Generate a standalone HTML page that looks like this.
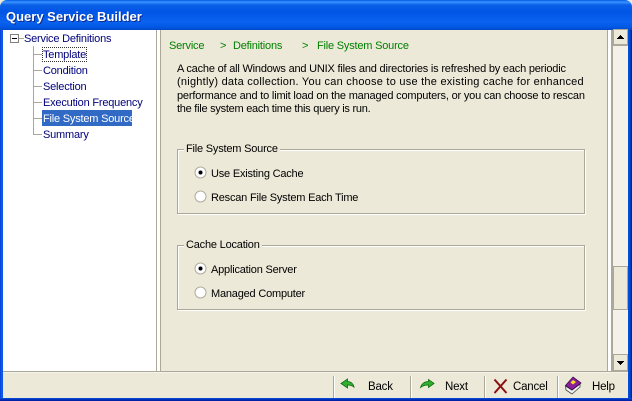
<!DOCTYPE html>
<html><head><meta charset="utf-8"><style>
html,body{margin:0;padding:0;background:#0a3ad0}
#w{position:relative;width:632px;height:401px;overflow:hidden;font:11px "Liberation Sans",sans-serif;color:#000;background:#ece9d8}
#w div{position:absolute;white-space:nowrap}
.t{height:14px;line-height:14px}
.r{letter-spacing:-.2px}
.tree{color:#00007c;height:16px;line-height:14px;letter-spacing:-.2px}
.g{color:#008000;font-size:11px;line-height:14px;letter-spacing:-.2px}
.l{background:#aca899}
.s{background:#aca899;box-shadow:1px 0 0 #fff}
.b{font-size:11.5px;letter-spacing:-.2px}
</style></head><body><div id="w">
<div style="left:0;top:0;width:632px;height:30px;border-radius:7px 7px 0 0;background:linear-gradient(180deg,#0058e6 0,#3a93ff 2px,#0a5fe8 5px,#0055e5 12px,#0a62f0 22px,#0258e4 27px,#0048c8 30px)"></div>
<div style="left:6px;top:8px;color:#fff;font:bold 13px/18px 'Liberation Sans',sans-serif;text-shadow:1px 1px 0 #0a2a90">Query Service Builder</div>
<div style="left:0;top:30px;width:3px;height:368px;background:linear-gradient(90deg,#0a3ad0,#0a5ef0 50%,#0855e5)"></div>
<div style="left:628px;top:30px;width:4px;height:368px;background:linear-gradient(90deg,#0055e5,#0040c8,#001ea0)"></div>
<div style="left:0;top:398px;width:632px;height:3px;background:linear-gradient(180deg,#0a50e0,#0030b8,#001ea0)"></div>

<!-- tree -->
<div style="left:3px;top:30px;width:153px;height:341px;background:#fff"></div>
<div class="l" style="left:156px;top:30px;width:1px;height:341px"></div>
<div style="left:157px;top:30px;width:3px;height:341px;background:#fff"></div>
<div class="l" style="left:160px;top:30px;width:1px;height:341px"></div>
<div style="left:10px;top:34px;width:7px;height:7px;border:1px solid #808080;background:#fff"></div>
<div style="left:12px;top:38px;width:5px;height:1px;background:#000"></div>
<div class="l" style="left:19px;top:38px;width:5px;height:1px"></div>
<div class="l" style="left:33px;top:46px;width:1px;height:88px"></div>
<div class="l" style="left:33px;top:54px;width:9px;height:1px"></div>
<div class="l" style="left:33px;top:70px;width:9px;height:1px"></div>
<div class="l" style="left:33px;top:86px;width:9px;height:1px"></div>
<div class="l" style="left:33px;top:102px;width:9px;height:1px"></div>
<div class="l" style="left:33px;top:118px;width:9px;height:1px"></div>
<div class="l" style="left:33px;top:134px;width:9px;height:1px"></div>
<div class="tree" style="left:24px;top:32px">Service Definitions</div>
<div style="left:42px;top:47px;width:45px;height:15px;border:1px dotted #333;box-sizing:border-box"></div>
<div class="tree" style="left:43px;top:48px">Template</div>
<div class="tree" style="left:43px;top:64px">Condition</div>
<div class="tree" style="left:43px;top:80px">Selection</div>
<div class="tree" style="left:43px;top:96px">Execution Frequency</div>
<div style="left:42px;top:110px;width:90px;height:16px;background:#316ac5"></div>
<div class="tree" style="left:43px;top:112px;color:#fff">File System Source</div>
<div class="tree" style="left:43px;top:128px">Summary</div>

<!-- breadcrumb -->
<div class="g" style="left:169px;top:39px">Service</div>
<div class="g" style="left:220px;top:39px">&gt;</div>
<div class="g" style="left:233px;top:39px">Definitions</div>
<div class="g" style="left:302px;top:39px">&gt;</div>
<div class="g" style="left:317px;top:39px">File System Source</div>

<div class="t" style="left:177px;top:62px;letter-spacing:-.2px">A cache of all Windows and UNIX files and directories is refreshed by each periodic</div>
<div class="t" style="left:177px;top:75px;letter-spacing:.24px">(nightly) data collection. You can choose to use the existing cache for enhanced</div>
<div class="t" style="left:177px;top:89px;letter-spacing:-.185px">performance and to limit load on the managed computers, or you can choose to rescan</div>
<div class="t" style="left:177px;top:102px;letter-spacing:-.26px">the file system each time this query is run.</div>

<!-- group 1 -->
<div style="left:177px;top:149px;width:406px;height:63px;border:1px solid #aca899;box-shadow:inset 1px 1px 0 #fff,1px 1px 0 #fff"></div>
<div class="t r" style="left:184px;top:142px;background:#ece9d8;padding:0 2px">File System Source</div>
<svg style="position:absolute;left:194px;top:166px" width="13" height="13"><circle cx="6.5" cy="6.5" r="5.5" fill="#fff" stroke="#b0ad9e"/><circle cx="6.5" cy="6.5" r="2" fill="#000"/></svg>
<div class="t r" style="left:211px;top:167px">Use Existing Cache</div>
<svg style="position:absolute;left:194px;top:190px" width="13" height="13"><circle cx="6.5" cy="6.5" r="5.5" fill="#fff" stroke="#b0ad9e"/></svg>
<div class="t r" style="left:211px;top:191px">Rescan File System Each Time</div>

<!-- group 2 -->
<div style="left:177px;top:245px;width:406px;height:63px;border:1px solid #aca899;box-shadow:inset 1px 1px 0 #fff,1px 1px 0 #fff"></div>
<div class="t r" style="left:184px;top:238px;background:#ece9d8;padding:0 2px">Cache Location</div>
<svg style="position:absolute;left:194px;top:262px" width="13" height="13"><circle cx="6.5" cy="6.5" r="5.5" fill="#fff" stroke="#b0ad9e"/><circle cx="6.5" cy="6.5" r="2" fill="#000"/></svg>
<div class="t r" style="left:211px;top:263px">Application Server</div>
<svg style="position:absolute;left:194px;top:286px" width="13" height="13"><circle cx="6.5" cy="6.5" r="5.5" fill="#fff" stroke="#b0ad9e"/></svg>
<div class="t r" style="left:211px;top:287px">Managed Computer</div>

<!-- scrollbar -->
<div class="l" style="left:607px;top:30px;width:1px;height:341px"></div>
<div style="left:608px;top:30px;width:3px;height:341px;background:#fff"></div>
<div class="l" style="left:611px;top:30px;width:2px;height:341px"></div>
<div style="left:613px;top:30px;width:15px;height:341px;background:#f3f1e8"></div>
<div style="left:613px;top:29px;width:15px;height:17px;box-sizing:border-box;border:1px solid #aca899;border-width:1px 1px 2px 1px;background:#ece9d8"></div>
<svg style="position:absolute;left:617px;top:35px" width="8" height="5"><path d="M3 0h1v1h1v1h1v1h1v1H0V3h1V2h1V1h1z" fill="#000"/></svg>
<div style="left:613px;top:266px;width:15px;height:44px;box-sizing:border-box;border:1px solid #aca899;background:#ece9d8"></div>
<div style="left:613px;top:354px;width:15px;height:17px;box-sizing:border-box;border:1px solid #aca899;background:#ece9d8"></div>
<svg style="position:absolute;left:617px;top:361px" width="8" height="5"><path d="M0 0h7v1H6v1H5v1H4v1H3V3H2V2H1V1H0z" fill="#000"/></svg>

<!-- toolbar -->
<div class="l" style="left:3px;top:371px;width:625px;height:1px"></div>
<div style="left:3px;top:372px;width:625px;height:26px;background:#ece9d8;box-shadow:inset 0 1px 0 #f5f3ea"></div>
<div class="s" style="left:333px;top:376px;width:1px;height:22px"></div>
<div class="s" style="left:410px;top:376px;width:1px;height:22px"></div>
<div class="s" style="left:484px;top:376px;width:1px;height:22px"></div>
<div class="s" style="left:557px;top:376px;width:1px;height:22px"></div>
<svg style="position:absolute;left:340px;top:378px" width="16" height="12"><path d="M1 5.5L7.5 1V3.5C10.5 3.5 13 5 14 9C12 7.5 10 7 7.5 7V10Z" fill="#30b030" stroke="#0b6b0b" stroke-width=".8"/></svg>
<svg style="position:absolute;left:419px;top:378px" width="16" height="12"><path d="M15 5.5L9.5 1.5V3.5C6 3.5 3 5 1.5 9.5C4 7.5 6.5 7 9.5 7V9.5Z" fill="#30b030" stroke="#0b6b0b" stroke-width=".8"/></svg>
<svg style="position:absolute;left:493px;top:378px" width="16" height="16"><path d="M1.5 1.5L13.5 15M13.5 1.5L1.5 15" stroke="#8c1010" stroke-width="2" fill="none"/></svg>
<svg style="position:absolute;left:564px;top:376px" width="18" height="19"><path d="M1.5 10L2 14L8 18L16 11V8L8 14Z" fill="#f0f0f0" stroke="#444" stroke-width=".8"/><path d="M1.5 9.5L9 1L17 7L8 14Z" fill="#8a1f9a" stroke="#3a0a4a" stroke-width=".8"/><path d="M6.5 6.5L9 4L12 6L9 8.5Z" fill="#f2e020"/></svg>
<div class="t b" style="left:368px;top:380px">Back</div>
<div class="t b" style="left:445px;top:380px">Next</div>
<div class="t b" style="left:513px;top:380px">Cancel</div>
<div class="t b" style="left:592px;top:380px">Help</div>
</div></body></html>
